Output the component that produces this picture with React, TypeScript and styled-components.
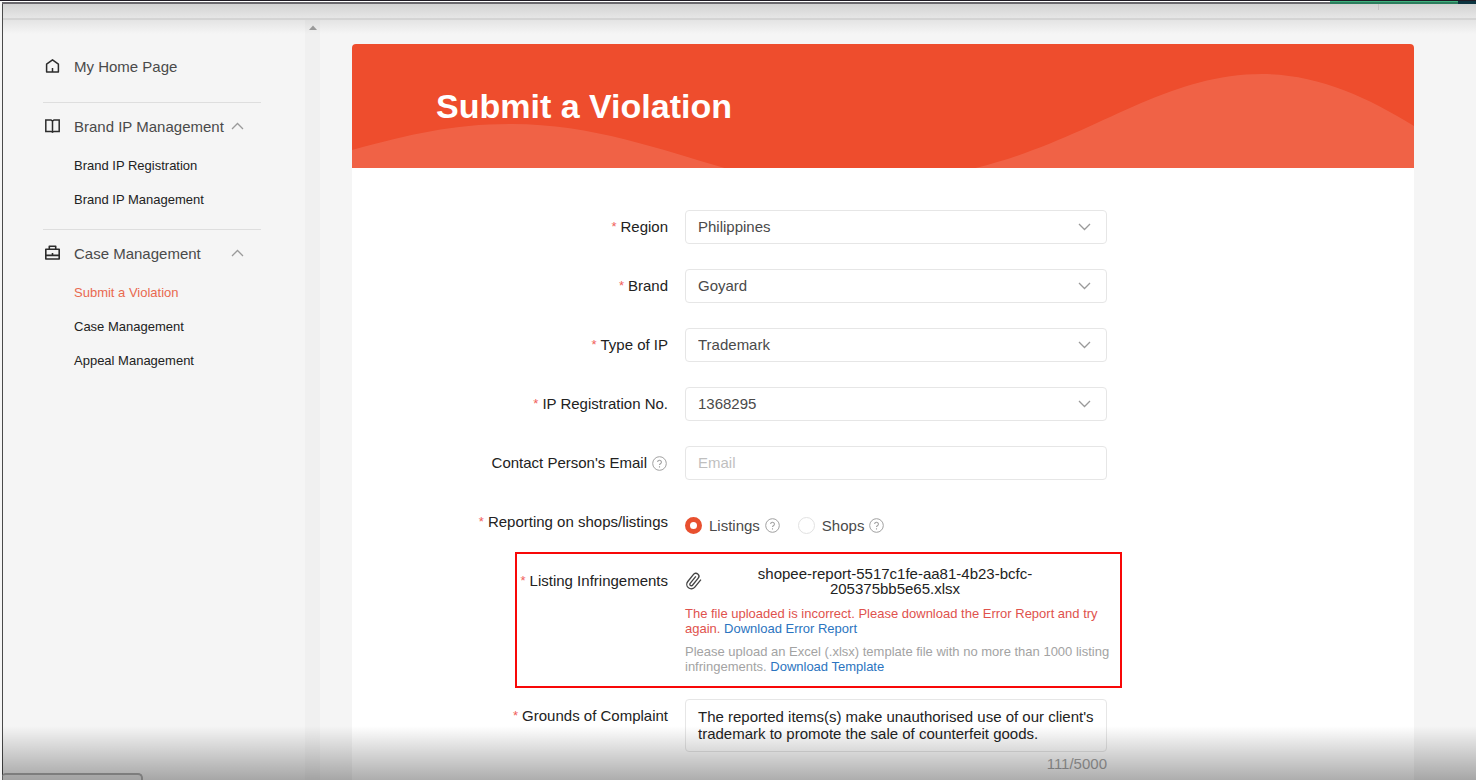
import React, { useState } from "react";
import styled, { createGlobalStyle } from "styled-components";

const GlobalStyle = createGlobalStyle`
  *, *::before, *::after { box-sizing: border-box; }
  body {
    margin: 0;
    background: #f5f5f5;
    color: #222;
    font-family: "Liberation Sans", Arial, sans-serif;
    font-size: 15px;
  }
  input, select, textarea, button { font: inherit; color: inherit; }
  a { text-decoration: none; }
`;

/* ---------- window frame ---------- */

const Window = styled.div`
  position: relative;
  display: flex;
  flex-direction: column;
  height: 100vh;
  overflow: hidden;
  border-top: 1px solid #1f1b24;
`;

const FrameTop = styled.div`
  flex: none;
  display: flex;
  justify-content: flex-end;
  height: 3px;
  margin-left: 2px;
  background: linear-gradient(#fff 0 1px, #6a686d 1px 3px);
`;

const FrameAccent = styled.span<{ $width: number; $tone: string }>`
  width: ${(p) => p.$width}px;
  background: ${(p) => p.$tone};
`;

const Viewport = styled.div`
  flex: 1;
  display: flex;
  flex-direction: column;
  min-height: 0;
  margin-left: 2px;
  border-left: 1px solid #4a4a4a;
`;

const Toolbar = styled.div`
  flex: none;
  display: flex;
  justify-content: flex-end;
  height: 16px;
  padding-right: 97px;
  background: linear-gradient(#d3d3d3, #e6e6e6);
  border-bottom: 2px solid #d4d4d4;
`;

const ToolbarTick = styled.span`
  width: 1px;
  height: 6px;
  background: #c4c4c4;
`;

const Shade = styled.div`
  position: absolute;
  inset: auto 0 0 2px;
  height: 54px;
  background: linear-gradient(rgba(0, 0, 0, 0), rgba(0, 0, 0, 0.32));
  pointer-events: none;
`;

const StatusBubble = styled.div`
  position: absolute;
  left: 2px;
  bottom: 0;
  width: 141px;
  height: 7px;
  border: 2px solid #7d7d7d;
  border-width: 2px 2px 0 0;
  border-radius: 4px 5px 0 0;
  background: rgba(160, 160, 160, 0.4);
`;

const Columns = styled.div`
  flex: 1;
  display: flex;
  min-height: 0;
  background: linear-gradient(#e4e4e4, #f5f5f5 14px);
`;

/* ---------- sidebar ---------- */

const Sidebar = styled.nav`
  flex: none;
  width: 302px;
  padding: 31px 44px 0 40px;
`;

const Group = styled.section`
  padding-bottom: 12px;
  & + & {
    border-top: 1px solid #dedede;
    padding-top: 8px;
  }
`;

const GroupHead = styled.button`
  display: flex;
  align-items: center;
  gap: 13px;
  width: 201px;
  height: 30px;
  padding: 0;
  border: 0;
  background: none;
  color: #4a4a4a;
  white-space: nowrap;
  cursor: pointer;
  svg { flex: none; color: #2c2c2c; }
`;

const GroupTitle = styled.span`
  flex: 1;
  width: 0;
  text-align: left;
`;

const HomeLink = styled.a`
  display: flex;
  align-items: center;
  gap: 13px;
  height: 30px;
  margin-bottom: 9px;
  color: #4a4a4a;
  svg { flex: none; color: #2c2c2c; }
`;

const SubList = styled.ul`
  margin: 8px 0 0;
  padding: 0 0 0 31px;
  list-style: none;
`;

const SubLink = styled.a<{ $active?: boolean }>`
  display: block;
  font-size: 13px;
  line-height: 34px;
  color: ${(p) => (p.$active ? "#e9694f" : "#222")};
`;

const ScrollTrack = styled.div`
  flex: none;
  width: 15px;
  padding-top: 5px;
  background: rgba(0, 0, 0, 0.02);
  svg { display: block; margin: 0 auto; }
`;

/* ---------- form card ---------- */

const Main = styled.main`
  flex: 1;
  min-width: 0;
  padding: 24px 62px 0 32px;
`;

const Card = styled.div`
  height: 100%;
  background: #fff;
  border-radius: 4px 4px 0 0;
  overflow: hidden;
`;

const Banner = styled.header`
  position: relative;
  display: flex;
  align-items: center;
  height: 124px;
  padding: 0 84px;
  background: #ee4d2d;
`;

const Wave = styled.svg`
  position: absolute;
  inset: 0;
  width: 100%;
  height: 100%;
`;

const Title = styled.h1`
  position: relative;
  margin: 0;
  color: #fff;
  font-size: 34px;
  line-height: 40px;
`;

const Form = styled.form`
  display: flex;
  flex-direction: column;
  padding: 42px 0 0 84px;
`;

const Row = styled.div<{ $gap?: number }>`
  display: grid;
  grid-template-columns: 232px 422px;
  column-gap: 17px;
  margin-bottom: ${(p) => p.$gap ?? 25}px;
`;

const Label = styled.label<{ $required?: boolean }>`
  display: flex;
  align-items: center;
  justify-content: flex-end;
  height: 34px;
  padding-bottom: 2px;
  white-space: nowrap;
  svg { margin: 2px 1px 0 5px; }
  ${(p) =>
    p.$required &&
    `&::before { content: "*"; margin-right: 4px; color: #f0605a; font-size: 13px; }`}
`;

const SelectBox = styled.div`
  display: grid;
  align-items: center;
  > * { grid-area: 1 / 1; }
  svg { justify-self: end; margin-right: 16px; pointer-events: none; }
`;

const Select = styled.select`
  appearance: none;
  width: 100%;
  height: 34px;
  padding: 0 12px 2px;
  border: 1px solid #e6e6e6;
  border-radius: 4px;
  background: #fff;
  color: #4a4a4a;
`;

const TextInput = styled.input`
  width: 100%;
  height: 34px;
  padding: 0 12px 2px;
  border: 1px solid #e6e6e6;
  border-radius: 4px;
  &::placeholder { color: #bfbfbf; }
`;

const RadioGroup = styled.div`
  display: flex;
  align-items: center;
  gap: 18px;
  height: 34px;
  padding-top: 7px;
  color: #4a4a4a;
`;

const RadioLabel = styled.label`
  display: flex;
  align-items: center;
  svg { margin-left: 5px; }
`;

const Radio = styled.input`
  appearance: none;
  width: 17px;
  height: 17px;
  margin: 0 7px 0 0;
  border: 1px solid #e2e2e2;
  border-radius: 50%;
  background: #fff;
  &:checked { border: 5px solid #e8502f; }
`;

const Callout = styled.div`
  width: 607px;
  height: 136px;
  margin: -12px 0 11px 79px;
  padding: 10px 0 0;
  border: 2px solid #f80808;
  ${Row} { grid-template-columns: 151px 422px; }
`;

const FileName = styled.div`
  display: grid;
  grid-template-columns: 18px 284px;
  column-gap: 50px;
  align-items: center;
  line-height: 15px;
  padding-top: 2px;
  text-align: center;
`;

const Hint = styled.p<{ $error?: boolean }>`
  width: 430px;
  margin: ${(p) => (p.$error ? 10 : 8)}px 0 0;
  font-size: 13px;
  line-height: 15px;
  color: ${(p) => (p.$error ? "#e0524d" : "#a3a3a3")};
  a { color: #2b74c0; }
`;

const TextArea = styled.textarea`
  display: block;
  width: 100%;
  height: 53px;
  padding: 8px 12px;
  border: 1px solid #e6e6e6;
  border-radius: 4px;
  line-height: 17px;
  resize: none;
  overflow: hidden;
`;

const Counter = styled.div`
  padding-top: 3px;
  text-align: right;
  line-height: 17px;
  color: #a6a6a6;
`;

/* ---------- icons ---------- */

const line = { fill: "none", stroke: "currentColor" } as const;

const HomeIcon = () => (
  <svg width="18" height="18" viewBox="0 0 18 18" {...line} strokeWidth="1.5" strokeLinejoin="round">
    <path d="M3.6 15V7.200L9.500 2.800l5.900 4.400V15zM9.500 15v-4" />
  </svg>
);

const BookIcon = () => (
  <svg width="18" height="18" viewBox="0 0 18 18" {...line} strokeWidth="1.5">
    <path d="M2.800 3h5.200l1.500 1L11 3h5.200v11.400H11l-1.500.8-1.500-.8H2.800zM9.500 4v12" />
  </svg>
);

const CaseIcon = () => (
  <svg width="18" height="18" viewBox="0 0 18 18" {...line} strokeWidth="1.6" strokeLinejoin="round">
    <path d="M2.800 5.200h13.400v9.800H2.800zM6.300 5V2.200h6.400V5M2.800 11.400h13.400M9.500 9v2.400" />
  </svg>
);

const Caret = ({ up = false }: { up?: boolean }) => (
  <svg width="13" height="8" viewBox="0 0 13 8" fill="none" stroke="#9a9a9a" strokeWidth="1.3">
    <path d={up ? "M1 7l5.500-5.500L12 7" : "M1 1l5.500 5.500L12 1"} />
  </svg>
);

const HelpIcon = () => (
  <svg width="15" height="15" viewBox="0 0 15 15" fill="none" stroke="#a0a0a0">
    <circle cx="7.500" cy="7.500" r="6.800" />
    <path d="M5.600 6.100a1.900 1.900 0 1 1 2.800 1.700c-.7.4-.9.600-.9 1.300M7.500 10.200v1.200" strokeWidth="1.100" />
  </svg>
);

const ClipIcon = () => (
  <svg width="18" height="18" viewBox="0 0 24 24" fill="none" stroke="#444" strokeWidth="1.8">
    <path
      transform="rotate(-6 12 12)"
      d="M21.400 11.050l-9.190 9.190a6 6 0 0 1-8.490-8.490l8.570-8.570A4 4 0 1 1 18 8.840l-8.590 8.570a2 2 0 0 1-2.830-2.830l8.490-8.480"
    />
  </svg>
);

/* ---------- content ---------- */

const menu = [
  { title: "Brand IP Management", icon: <BookIcon />, items: ["Brand IP Registration", "Brand IP Management"] },
  { title: "Case Management", icon: <CaseIcon />, items: ["Submit a Violation", "Case Management", "Appeal Management"] },
];

const selects = [
  { id: "region", label: "Region", value: "Philippines" },
  { id: "brand", label: "Brand", value: "Goyard" },
  { id: "ip-type", label: "Type of IP", value: "Trademark" },
  { id: "ip-number", label: "IP Registration No.", value: "1368295" },
];

export default function App() {
  const [target, setTarget] = useState("Listings");
  return (
    <Window>
      <GlobalStyle />
      <FrameTop>
        <FrameAccent $width={128} $tone="linear-gradient(#3fb37f 0 1px, #2c7d5d 1px)" />
        <FrameAccent $width={18} $tone="#0c3440" />
      </FrameTop>
      <Viewport>
        <Toolbar>
          <ToolbarTick />
        </Toolbar>
        <Columns>
          <Sidebar>
            <Group>
              <HomeLink href="#home">
                <HomeIcon />
                My Home Page
              </HomeLink>
            </Group>
            {menu.map((group) => (
              <Group key={group.title}>
                <GroupHead type="button">
                  {group.icon}
                  <GroupTitle>{group.title}</GroupTitle>
                  <Caret up />
                </GroupHead>
                <SubList>
                  {group.items.map((item) => (
                    <li key={item}>
                      <SubLink href="#menu" $active={item === "Submit a Violation"}>
                        {item}
                      </SubLink>
                    </li>
                  ))}
                </SubList>
              </Group>
            ))}
          </Sidebar>
          <ScrollTrack>
            <svg width="8" height="5" viewBox="0 0 8 5">
              <path d="M0 5l4-4.500L8 5z" fill="#999" />
            </svg>
          </ScrollTrack>
          <Main>
            <Card>
              <Banner>
                <Wave viewBox="0 0 1063 124" preserveAspectRatio="none">
                  <path
                    d="M0 106C60 90 100 80 160 80C240 80 310 106 373 124H0zM624 124C740 96 810 30 911 30C965 30 1015 52 1063 82V124z"
                    fill="#fff"
                    fillOpacity=".12"
                  />
                </Wave>
                <Title>Submit a Violation</Title>
              </Banner>
              <Form>
                {selects.map((field) => (
                  <Row key={field.id}>
                    <Label htmlFor={field.id} $required>
                      {field.label}
                    </Label>
                    <SelectBox>
                      <Select id={field.id} defaultValue={field.value}>
                        <option>{field.value}</option>
                      </Select>
                      <Caret />
                    </SelectBox>
                  </Row>
                ))}
                <Row>
                  <Label htmlFor="email">
                    Contact Person's Email
                    <HelpIcon />
                  </Label>
                  <TextInput id="email" type="email" placeholder="Email" />
                </Row>
                <Row>
                  <Label as="span" id="target-label" $required>
                    Reporting on shops/listings
                  </Label>
                  <RadioGroup role="radiogroup" aria-labelledby="target-label">
                    {["Listings", "Shops"].map((name) => (
                      <RadioLabel key={name}>
                        <Radio
                          type="radio"
                          name="target"
                          checked={target === name}
                          onChange={() => setTarget(name)}
                        />
                        {name}
                        <HelpIcon />
                      </RadioLabel>
                    ))}
                  </RadioGroup>
                </Row>
                <Callout>
                  <Row $gap={0}>
                    <Label as="span" $required>
                      Listing Infringements
                    </Label>
                    <div>
                      <FileName>
                        <ClipIcon />
                        <span>shopee-report-5517c1fe-aa81-4b23-bcfc-205375bb5e65.xlsx</span>
                      </FileName>
                      <Hint $error>
                        The file uploaded is incorrect. Please download the Error Report and try again.{" "}
                        <a href="#error-report">Download Error Report</a>
                      </Hint>
                      <Hint>
                        Please upload an Excel (.xlsx) template file with no more than 1000 listing
                        infringements. <a href="#template">Download Template</a>
                      </Hint>
                    </div>
                  </Row>
                </Callout>
                <Row $gap={0}>
                  <Label htmlFor="grounds" $required>
                    Grounds of Complaint
                  </Label>
                  <div>
                    <TextArea
                      id="grounds"
                      defaultValue="The reported items(s) make unauthorised use of our client's trademark to promote the sale of counterfeit goods."
                    />
                    <Counter>111/5000</Counter>
                  </div>
                </Row>
              </Form>
            </Card>
          </Main>
        </Columns>
      </Viewport>
      <Shade />
      <StatusBubble />
    </Window>
  );
}
